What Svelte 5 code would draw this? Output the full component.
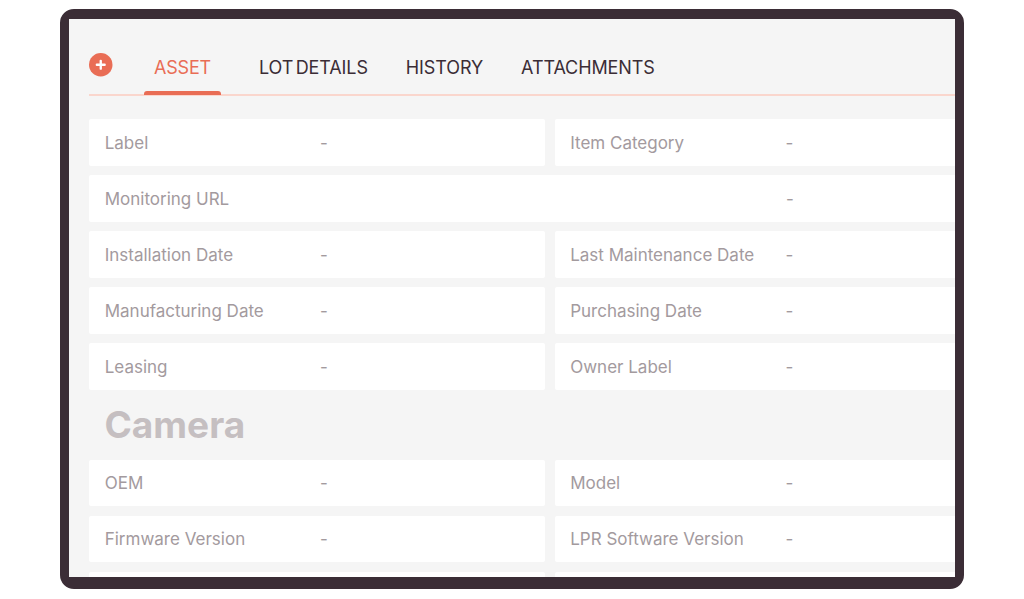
<script>
	const tabs = ['ASSET', 'LOT DETAILS', 'HISTORY', 'ATTACHMENTS']
	const assetRows = [
		['Label', 'Item Category'],
		['Monitoring URL'],
		['Installation Date', 'Last Maintenance Date'],
		['Manufacturing Date', 'Purchasing Date'],
		['Leasing', 'Owner Label']
	]
	const cameraRows = [
		['OEM', 'Model'],
		['Firmware Version', 'LPR Software Version'],
		['', '']
	]
</script>

<div class="page">
	<div class="frame">
		<div class="screen">
			<div class="tabbar">
				<button class="add" aria-label="add">
					<svg viewBox="0 0 24 24" width="23.5" height="23.5">
						<circle cx="12" cy="12" r="12" fill="#e96d55" />
						<path d="M12 8v8M8 12h8" stroke="#fff" stroke-width="2.4" stroke-linecap="round" />
					</svg>
				</button>
				<div class="tabs">
					{#each tabs as tab, i}
						<div class="tab" class:active={i === 0}>{tab}</div>
					{/each}
				</div>
			</div>

			<div class="grid first">
				{#each assetRows as row}
					{#if row.length === 1}
						<div class="cell wide">
							<span class="label">{row[0]}</span>
							<span class="value">-</span>
						</div>
					{:else}
						{#each row as label}
							<div class="cell">
								<span class="label">{label}</span>
								<span class="value">-</span>
							</div>
						{/each}
					{/if}
				{/each}
			</div>

			<h2>Camera</h2>

			<div class="grid">
				{#each cameraRows as row}
					{#each row as label}
						<div class="cell">
							<span class="label">{label}</span>
							{#if label}<span class="value">-</span>{/if}
						</div>
					{/each}
				{/each}
			</div>
		</div>
	</div>
</div>

<style>
	:global(body) {
		background: #fff;
		font-family: Inter, "Liberation Sans", sans-serif;
	}

	.page {
		height: 599px;
		padding: 9px 60px 10px 60px;
		box-sizing: border-box;
		overflow: hidden;
	}

	.frame {
		height: 580px;
		box-sizing: border-box;
		border: solid #3b2d36;
		border-width: 10px 9px 12px 9px;
		border-radius: 14px;
		background: #3b2d36;
	}

	.screen {
		height: 100%;
		background: #f5f5f5;
		padding-left: 20px;
		overflow: hidden;
	}

	.tabbar {
		height: 77px;
		display: flex;
		align-items: flex-start;
		border-bottom: 2px solid #fad6cd;
		box-sizing: border-box;
	}

	.add {
		border: none;
		background: none;
		padding: 0;
		margin-top: 34px;
		width: 24px;
		height: 24px;
		flex: none;
	}

	.add svg {
		display: block;
	}

	.tabs {
		display: flex;
		margin-left: 31px;
		height: 100%;
	}

	.tab {
		font-size: 18px;
		line-height: 22px;
		padding: 38px 10px 0;
		margin-right: 18px;
		color: #3b2d36;
		letter-spacing: -0.1px;
		word-spacing: -2.5px;
		white-space: nowrap;
		box-sizing: border-box;
		height: 100%;
		position: relative;
	}

	.tab.active {
		color: #e96d55;
		letter-spacing: -0.2px;
		margin-right: 28px;
	}

	.tab.active::after {
		content: '';
		position: absolute;
		left: 0;
		right: 0;
		bottom: -1px;
		height: 4px;
		background: #e96d55;
		border-radius: 3px 3px 0 0;
	}

	.grid {
		display: grid;
		grid-template-columns: 456px 456px;
		gap: 9.3px 9.5px;
	}

	.grid.first {
		margin-top: 23.4px;
	}

	.cell {
		height: 46.7px;
		background: #fff;
		border-radius: 2px;
		display: grid;
		grid-template-columns: 215.3px 1fr;
		align-items: center;
		padding-left: 15.7px;
		box-sizing: border-box;
		font-size: 17px;
		color: #a39a9e;
	}

	.cell.wide {
		grid-column: 1 / 3;
		grid-template-columns: 681.3px 1fr;
	}

	.label {
		white-space: nowrap;
	}

	h2 {
		margin: 0;
		height: 69.6px;
		padding-left: 15.5px;
		font-size: 37px;
		font-weight: 700;
		line-height: 70px;
		color: #c5bfc1;
	}
</style>
